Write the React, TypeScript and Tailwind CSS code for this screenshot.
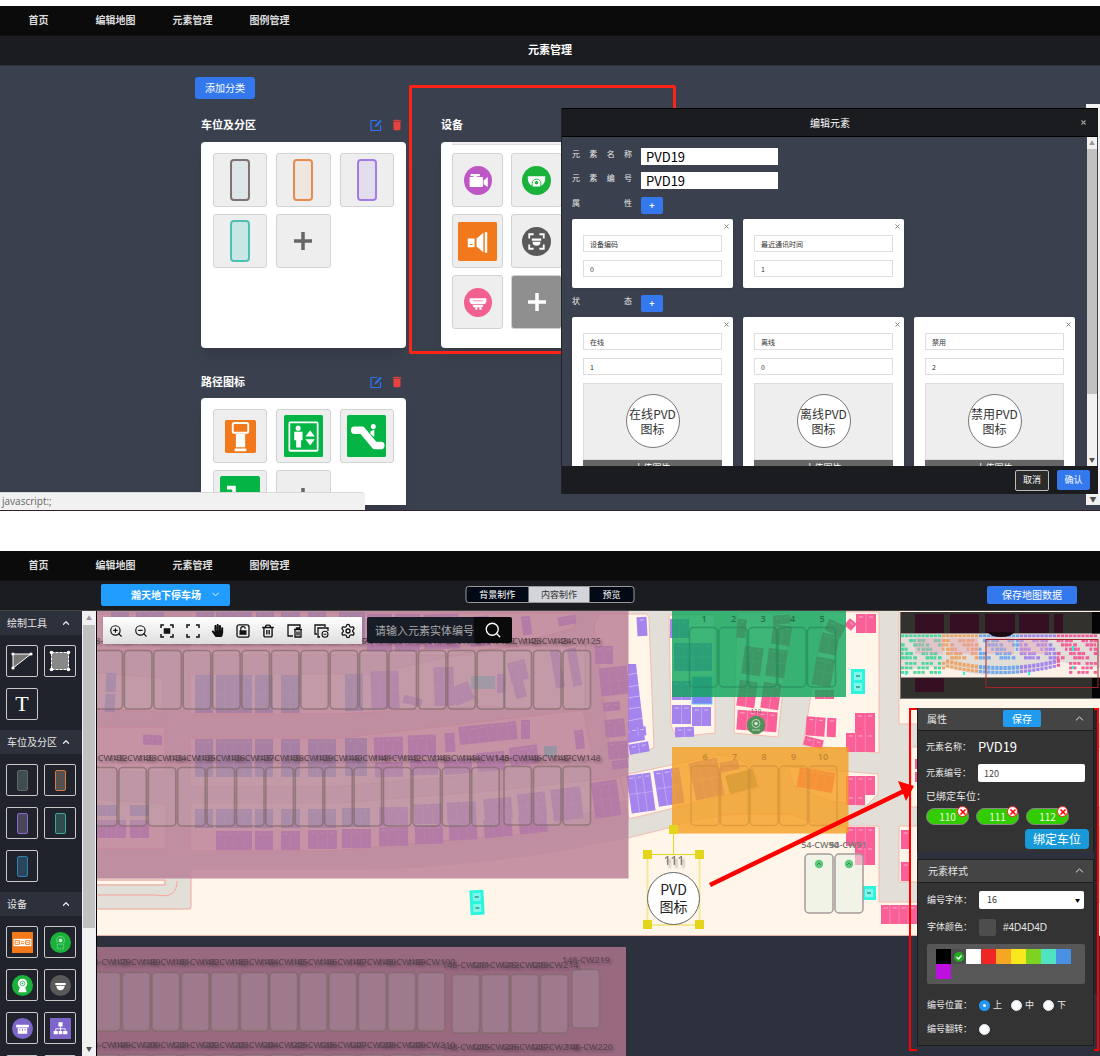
import React from 'react';
import { ChevronDown, ChevronUp, Search, Settings, Trash2, ZoomIn, ZoomOut, X } from 'lucide-react';
import { FaHandPaper } from 'react-icons/fa';
import { MdDelete } from 'react-icons/md';

const navItems = ['首页', '编辑地图', '元素管理', '图例管理'];

function NavBar() {
  return (
    <nav className="flex h-[29px] items-center bg-[#0b0b0b] pb-[2px] text-[10px] font-bold text-[#dcdcdc]">
      {navItems.map((t) => (
        <a key={t} href="#" className="w-[77px] text-center">
          {t}
        </a>
      ))}
    </nav>
  );
}

/* ---------- icons ---------- */

type DeviceKind =
  | 'camera' | 'dome' | 'speaker' | 'scan' | 'detector' | 'kiosk' | 'lift' | 'escalator' | 'stairs'
  | 'display' | 'webcamLine' | 'webcam' | 'halfDome' | 'gate' | 'network';

function DeviceIcon({ kind, className }: { kind: DeviceKind; className: string }) {
  const art: Record<DeviceKind, React.ReactNode> = {
    camera: (
      <>
        <circle cx="20" cy="20" r="20" fill="#bd57c6" />
        <g fill="#fff">
          <rect x="8" y="15" width="19" height="14" rx="1" />
          <rect x="9" y="11" width="14" height="3" rx="1.5" />
          <rect x="14" y="13" width="4" height="3" />
          <path d="M28 20l6-5v14l-6-4z" />
        </g>
      </>
    ),
    dome: (
      <>
        <circle cx="20" cy="20" r="20" fill="#1bb23c" />
        <path d="M8 14h24v4a12 11 0 0 1-24 0z" fill="#fff" />
        <path d="M14 29v-5a6 6 0 0 1 12 0v5z" fill="#fff" stroke="#1bb23c" strokeWidth="1.3" />
        <circle cx="20" cy="23" r="2.4" fill="#1bb23c" />
      </>
    ),
    speaker: (
      <>
        <rect width="40" height="40" rx="1.5" fill="#f1791b" />
        <g fill="#fff">
          <path d="M10 17h7v9h-7zM19 17l7-6v20l-7-6zM27.5 10.5h2.5v21h-2.5z" />
        </g>
        <path d="M12 23h3" stroke="#f1791b" />
      </>
    ),
    scan: (
      <>
        <circle cx="20" cy="20" r="20" fill="#595959" />
        <path d="M10 16v-6h6M24 10h6v6M30 24v6h-6M16 30h-6v-6" fill="none" stroke="#fff" strokeWidth="2.500" />
        <path d="M13.500 16h13v3h-13zM14.500 20.500h11a5.500 5.500 0 0 1-11 0z" fill="#fff" />
      </>
    ),
    detector: (
      <>
        <circle cx="20" cy="20" r="20" fill="#f2608f" />
        <path d="M8 14h24v5l-2 3H10l-2-3z" fill="#fff" />
        <path d="M12 23h16l-2 4H14z" fill="#fff" />
        <path d="M16 27v3h3v-3M22 27v3h3v-3" fill="#fff" />
        <path d="M13 17.500h14" stroke="#f2608f" />
      </>
    ),
    kiosk: (
      <>
        <rect width="40" height="40" rx="2" fill="#f1791b" />
        <rect x="10" y="3.500" width="20" height="12" rx="2" fill="none" stroke="#fff" strokeWidth="2.400" />
        <path d="M14 17h12v16H14zM12.500 34.500h15v3.500h-15z" fill="#fff" />
      </>
    ),
    lift: (
      <>
        <rect width="40" height="40" rx="1.500" fill="#04b545" />
        <rect x="5.500" y="7" width="29" height="27" rx="1" fill="none" stroke="#fff" strokeWidth="1.800" />
        <g fill="#fff">
          <circle cx="14.500" cy="12.500" r="2.500" />
          <path d="M10.500 16h8.500v8h-1.500v7h-5v-7h-2zM22 20.500l4.800-6 4.800 6zM22 23h9.600l-4.800 6z" />
        </g>
      </>
    ),
    escalator: (
      <>
        <rect width="40" height="40" rx="1.500" fill="#04b545" />
        <path d="M7.500 14.500h8l13 14.500h6.500" fill="none" stroke="#fff" strokeWidth="7" strokeLinecap="round" strokeLinejoin="round" />
        <circle cx="27" cy="11" r="2.500" fill="#fff" />
        <path d="M24 15.500l4-1.500v7l-4-3z" fill="#fff" />
      </>
    ),
    stairs: (
      <>
        <rect width="40" height="40" rx="2" fill="#04b545" />
        <path d="M7 11h7v6h7v7h7v7h6" fill="none" stroke="#fff" strokeWidth="3.500" />
      </>
    ),
    display: (
      <>
        <rect width="40" height="40" rx="1" fill="#f1791b" />
        <rect x="3" y="13" width="34" height="14" fill="#fff" />
        <path d="M6 16.500h8v7H6zM26 16.500h8v7h-8z" fill="none" stroke="#f1791b" strokeWidth="1.800" />
        <path d="M9 20h3M17 18.500h6M17 22h6M28 20h4" stroke="#f1791b" strokeWidth="1.500" />
      </>
    ),
    webcamLine: (
      <>
        <circle cx="20" cy="20" r="20" fill="#1bb23c" />
        <circle cx="20" cy="16" r="7.500" fill="none" stroke="#d8f5de" strokeDasharray="3 1" />
        <circle cx="20" cy="16" r="3.500" fill="#bfeec9" />
        <path d="M14 23v9h12v-9" fill="none" stroke="#d8f5de" strokeDasharray="3 1.500" />
      </>
    ),
    webcam: (
      <>
        <circle cx="20" cy="20" r="20" fill="#1bb23c" />
        <circle cx="20" cy="16" r="9" fill="#fff" />
        <path d="M15 23h10l3 10H12z" fill="#fff" />
        <circle cx="20" cy="16" r="4.500" fill="none" stroke="#1bb23c" strokeWidth="1.500" />
        <circle cx="20" cy="16" r="1.500" fill="#1bb23c" />
      </>
    ),
    halfDome: (
      <>
        <circle cx="20" cy="20" r="20" fill="#595959" />
        <path d="M10 15h20v4H10zM12 20.500h16a8 8.500 0 0 1-16 0z" fill="#fff" />
      </>
    ),
    gate: (
      <>
        <circle cx="20" cy="20" r="20" fill="#7d65c9" />
        <path d="M8 13h24v5H8zM11 19h18v11H11z" fill="#fff" />
        <path d="M15 20v4M20 20v5M25 20v4" stroke="#7d65c9" strokeWidth="1.500" />
      </>
    ),
    network: (
      <>
        <rect width="40" height="40" rx="1" fill="#7d65c9" />
        <path d="M16 8h8v8h-8zM7 25h8v6H7zM16.500 25h7v6h-7zM25 25h8v6h-8z" fill="#fff" />
        <path d="M20 16v9M11 25v-4.500h18V25" fill="none" stroke="#fff" strokeWidth="1.600" />
      </>
    ),
  };
  return (
    <svg viewBox="0 0 40 40" preserveAspectRatio="none" className={className} aria-hidden="true">
      {art[kind]}
    </svg>
  );
}

function EditIcon() {
  return (
    <svg viewBox="0 0 12 12" className="size-3" fill="none" stroke="#2f74ea" aria-hidden="true">
      <path d="M7 1.500H1v10h9.500V6" strokeWidth="1.200" />
      <path d="M5 8l.8-2.200L10.300 1l1.200 1.100L7 7z" fill="#2f74ea" strokeWidth=".6" />
    </svg>
  );
}

/* ---------- element management page ---------- */

function PlusIcon({ light }: { light?: boolean }) {
  return (
    <svg viewBox="0 0 18 18" className="size-[18px]" aria-hidden="true">
      <path d="M9 0v18M0 9h18" stroke={light ? '#fff' : '#666'} strokeWidth="3.500" />
    </svg>
  );
}

const tile = 'flex h-[54px] items-center justify-center rounded-[3px] border border-[#d2d2d2] bg-[#eee]';
const slotBase = 'h-[42px] w-5 rounded-[4px] border-2';

function CategoryHeader({ title, tools }: { title: string; tools?: boolean }) {
  return (
    <header className="flex h-[17px] items-center gap-2 pr-[2px]">
      <h2 className="flex-1 text-[11px] leading-[17px] font-bold text-white">{title}</h2>
      {tools && (
        <>
          <button aria-label="编辑"><EditIcon /></button>
          <button aria-label="删除"><MdDelete className="size-[14px] text-[#e8423f]" /></button>
        </>
      )}
    </header>
  );
}

function ElementPage() {
  return (
    <section className="relative overflow-hidden">
      <NavBar />
      <h1 className="h-[31px] border-t border-b border-t-[#111] border-b-[#30343f] bg-[#1b1c1f] text-center text-[11px] leading-[26px] font-bold text-white">
        元素管理
      </h1>
      <div className="relative flex h-[445px] flex-col overflow-hidden border-b border-[#33202c] bg-[#3b404e] pt-[11px] pl-[195px]">
        <button className="h-[22px] w-[60px] rounded-[3px] bg-[#3478ed] pb-[2px] text-[10px] text-white">添加分类</button>
        <div className="mt-[17px] grid grid-cols-[205px_205px] gap-x-[35px] gap-y-[25px] pl-[6px]">
          <article>
            <CategoryHeader title="车位及分区" tools />
            <div className="mt-[9px] grid h-[206px] grid-cols-3 content-start gap-x-[9px] gap-y-[7px] rounded-[4px] bg-white px-[12px] pt-[11px] shadow-lg">
              <button aria-label="灰色车位" className={tile}><span className={slotBase + ' border-[#807272] bg-[#dde7e7]'} /></button>
              <button aria-label="橙色车位" className={tile}><span className={slotBase + ' border-[#e68a4e] bg-[#efe6e0]'} /></button>
              <button aria-label="紫色车位" className={tile}><span className={slotBase + ' border-[#a27ce6] bg-[#e2deeb]'} /></button>
              <button aria-label="青色车位" className={tile}><span className={slotBase + ' border-[#50c0b5] bg-[#c8e6e4]'} /></button>
              <button aria-label="添加车位元素" className={tile}><PlusIcon /></button>
            </div>
          </article>
          <article className="relative">
            <div className="pointer-events-none absolute -top-[31px] -left-[32px] h-[269px] w-[267px] rounded-[2px] border-3 border-[#ff2416]" />
            <CategoryHeader title="设备" />
            <div className="mt-[9px] h-[206px] overflow-hidden rounded-[4px] bg-white px-[11px] shadow-lg">
              <div className="h-[3px] w-[168px] border-b border-[#ddd] bg-[#eee]" />
              <div className="mt-[8px] grid grid-cols-[51px_51px_51px] gap-x-[8px] gap-y-[7px]">
                <button aria-label="摄像机" className={tile}><DeviceIcon kind="camera" className="h-[29px] w-[28px]" /></button>
                <button aria-label="半球摄像机" className={tile}><DeviceIcon kind="dome" className="size-[29px]" /></button>
                <button aria-label="人脸" className={tile} />
                <button aria-label="广播" className={tile}><DeviceIcon kind="speaker" className="size-[39px]" /></button>
                <button aria-label="扫描" className={tile}><DeviceIcon kind="scan" className="size-[29px]" /></button>
                <button aria-label="屏幕" className={tile} />
                <button aria-label="探测器" className={tile}><DeviceIcon kind="detector" className="h-[29px] w-[28px]" /></button>
                <button aria-label="添加设备元素" className="flex h-[54px] items-center justify-center rounded-[3px] border border-[#d2d2d2] bg-[#8f8f8f]"><PlusIcon light /></button>
              </div>
            </div>
          </article>
          <article>
            <CategoryHeader title="路径图标" tools />
            <div className="mt-[8px] grid h-[107px] grid-cols-3 content-start gap-x-[9px] gap-y-[7px] overflow-hidden rounded-t-[4px] bg-white px-[12px] pt-[11px] shadow-lg">
              <button aria-label="缴费机" className={tile}><DeviceIcon kind="kiosk" className="h-[33px] w-[31px]" /></button>
              <button aria-label="电梯" className={tile}><DeviceIcon kind="lift" className="h-[42px] w-[39px]" /></button>
              <button aria-label="扶梯" className={tile}><DeviceIcon kind="escalator" className="h-[42px] w-[39px]" /></button>
              <button aria-label="楼梯" className={tile}><DeviceIcon kind="stairs" className="h-[42px] w-[40px]" /></button>
              <button aria-label="添加路径元素" className={tile}><PlusIcon /></button>
            </div>
          </article>
        </div>
        <div className="absolute top-[38px] right-0 flex h-[401px] w-[14px] flex-col justify-end bg-[#f1f1f1]">
          <span className="h-[11px] text-center text-[7px] leading-[10px] text-[#505050]">▼</span>
        </div>
        <div className="absolute bottom-0 left-0 h-[18px] w-[365px] rounded-tr-[4px] border-t border-[#d8d8d8] bg-[#f1f1f1] pl-[2px] font-['Open_Sans',sans-serif] text-[10px] leading-[17px] text-[#666]">
          javascript:;
        </div>
      </div>
      <EditDialog />
    </section>
  );
}

function CardShell({ children }: { children: React.ReactNode }) {
  return (
    <div className="relative w-[161px] rounded-[2px] bg-white px-[11px] pt-4 pb-[11px] shadow">
      <button aria-label="移除" className="absolute top-[4px] right-[3px]">
        <X className="size-[7px] text-[#777]" strokeWidth={3} />
      </button>
      {children}
    </div>
  );
}

const field = 'block h-[17px] w-full border border-[#dedede] bg-white px-[6px] text-[7px] text-[#333] outline-none';

function FormLabel({ htmlFor, children }: { htmlFor?: string; children: React.ReactNode }) {
  return (
    <label htmlFor={htmlFor} className="w-[60px] text-[8px] leading-[12px] [text-align-last:justify] text-[#e8e8e8]">
      {children}
    </label>
  );
}

function EditDialog() {
  const states = [
    ['在线', '1'],
    ['离线', '0'],
    ['禁用', '2'],
  ];
  const attrs = [
    ['设备编码', '0'],
    ['最近通讯时间', '1'],
  ];
  return (
    <div role="dialog" aria-label="编辑元素" className="absolute top-[102px] right-[2px] flex h-[386px] w-[537px] flex-col border-l border-[#20232a] bg-[#3b404e]">
      <header className="relative flex h-[29px] items-center justify-center border-y border-black bg-[#1b1c1f] text-[10px] text-white">
        编辑元素
        <button aria-label="关闭" className="absolute right-[11px]"><X className="size-[7px] text-[#999]" strokeWidth={4} /></button>
      </header>
      <div className="flex min-h-0 flex-1">
        <form className="min-w-0 flex-1 overflow-hidden pt-[11px] pl-[10px]">
          <div className="flex gap-[9px]">
            <FormLabel htmlFor="el-name">元素名称</FormLabel>
            <input id="el-name" defaultValue="PVD19" className="h-[17px] w-[137px] bg-white px-[5px] text-[13px] leading-[17px] text-black" />
          </div>
          <div className="mt-[7px] flex gap-[9px]">
            <FormLabel htmlFor="el-code">元素编号</FormLabel>
            <input id="el-code" defaultValue="PVD19" className="h-[17px] w-[137px] bg-white px-[5px] text-[13px] leading-[17px] text-black" />
          </div>
          <div className="mt-[8px] flex gap-[9px]">
            <FormLabel>属性</FormLabel>
            <button type="button" aria-label="添加属性" className="h-[17px] w-[22px] rounded-[2px] bg-[#3478ed] text-[9px] font-bold text-white">+</button>
          </div>
          <div className="mt-[5px] flex gap-[10px]">
            {attrs.map(([n, v]) => (
              <CardShell key={n}>
                <input aria-label="属性名" defaultValue={n} className={field} />
                <input aria-label="属性值" defaultValue={v} className={'mt-[8px] ' + field} />
              </CardShell>
            ))}
          </div>
          <div className="mt-[7px] flex gap-[9px]">
            <FormLabel>状态</FormLabel>
            <button type="button" aria-label="添加状态" className="h-[17px] w-[22px] rounded-[2px] bg-[#3478ed] text-[9px] font-bold text-white">+</button>
          </div>
          <div className="mt-[5px] flex gap-[10px]">
            {states.map(([n, v]) => (
              <CardShell key={n}>
                <input aria-label="状态名" defaultValue={n} className={field} />
                <input aria-label="状态值" defaultValue={v} className={'mt-[8px] ' + field} />
                <div className="mt-[8px] flex h-[77px] items-center justify-center border border-[#ddd] bg-[#eee] pb-[2px]">
                  <div className="flex size-[54px] flex-col items-center justify-center rounded-full border border-[#777] bg-white text-[12px] leading-[15px] whitespace-nowrap text-[#333]">
                    <span>{n}PVD</span>
                    <span>图标</span>
                  </div>
                </div>
                <button type="button" className="block h-[18px] w-full bg-[#666] pb-[3px] text-[9px] leading-[15px] text-white">上传图片</button>
              </CardShell>
            ))}
          </div>
        </form>
        <div className="mr-px flex w-[10px] flex-col items-center bg-[#f1f1f1]">
          <span className="h-[12px] text-[6px] leading-[12px] text-[#999]">▲</span>
          <div className="h-[245px] w-full bg-[#c1c1c1]" />
          <span className="mt-auto h-[12px] text-[6px] leading-[12px] text-[#505050]">▼</span>
        </div>
      </div>
      <footer className="flex h-[28px] items-center justify-end gap-[8px] bg-[#1b1c1f] pr-[8px]">
        <button className="h-[21px] w-[34px] rounded-[2px] border border-[#bbb] bg-[#2b2b2b] text-[9px] text-white">取消</button>
        <button className="h-[20px] w-[33px] rounded-[2px] bg-[#3478ed] text-[9px] text-white">确认</button>
      </footer>
    </div>
  );
}

/* ---------- parking map ---------- */

type Block = [number, number, number, number, number?];

const blueBlocks: Block[] = [
  [106, 673, 10, 19, 3], [105, 694, 10, 18, 3],
  [195, 675, 18, 38], [216, 675, 36, 38], [255, 675, 18, 38], [281, 675, 19, 38], [345, 674, 18, 37],
  [195, 739, 18, 38], [216, 739, 36, 38], [255, 739, 18, 38], [281, 739, 19, 38], [308, 739, 28, 38], [345, 738, 22, 38],
  [97, 805, 20, 11], [130, 805, 19, 11], [195, 809, 18, 19], [216, 809, 36, 19], [255, 809, 18, 19], [281, 809, 19, 19],
  [308, 809, 28, 19], [342, 808, 28, 19],
  [111, 612, 18, 10], [136, 612, 28, 10], [196, 612, 18, 28], [216, 612, 36, 28], [256, 612, 18, 28], [281, 612, 19, 28], [308, 612, 18, 28], [339, 612, 26, 28],
];
const purpleBlocks: Block[] = [
  [97, 820, 29, 18], [130, 820, 19, 18],
  [143, 735, 19, 10, 3], [371, 671, 28, 38, -2], [403, 697, 19, 8, 15], [434, 667, 20, 39, -2], [452, 684, 20, 19, -22],
  [497, 674, 9, 19], [509, 661, 18, 20, -14], [514, 680, 11, 18, -14], [553, 650, 9, 38, -10], [570, 648, 9, 38, -10],
  [367, 614, 25, 38], [395, 614, 25, 38], [424, 614, 35, 35, -2], [470, 616, 20, 30, -5], [522, 616, 9, 19, -8], [558, 616, 18, 9, -10],
  [595, 646, 18, 18],
  [374, 737, 29, 22, -2], [408, 735, 28, 22, -2], [445, 733, 10, 19, -4], [459, 724, 58, 18, -6], [521, 720, 9, 19], [575, 730, 9, 19, -6],
  [375, 762, 28, 15, -2], [410, 760, 28, 15, -2], [444, 759, 28, 15, -4], [477, 752, 28, 19, -5], [510, 746, 28, 19, -8],
  [379, 807, 29, 19, -1], [414, 804, 28, 20, -2], [447, 802, 29, 20, -3], [484, 798, 28, 21, -5], [518, 793, 28, 25, -6], [552, 788, 30, 32, -7], [593, 781, 26, 36, -8],
  [379, 827, 29, 19, -1], [415, 825, 28, 19, -2], [449, 822, 28, 18, -3], [484, 819, 28, 18, -5], [519, 815, 28, 18, -6],
  [216, 831, 36, 19], [255, 831, 18, 19], [281, 831, 19, 19], [308, 830, 29, 19], [342, 829, 29, 19],
  [600, 667, 28, 28, -6], [603, 702, 17, 9, -6], [605, 719, 20, 18, -5], [608, 741, 20, 18, -5], [612, 760, 16, 9, -8],
  [637, 617, 10, 19, -3], [630, 727, 16, 9, -6], [629, 743, 20, 10, -10],
  [670, 619, 19, 19], [674, 643, 38, 28], [672, 681, 19, 19], [672, 705, 19, 19], [692, 707, 19, 19], [675, 727, 19, 10, -2],
  [629, 774, 24, 38, -8], [656, 769, 26, 36, -9], [692, 760, 29, 38, -12], [720, 761, 19, 10, -12],
];
const pinkBlocks: Block[] = [
  [737, 711, 40, 20, 4], [738, 681, 18, 26, 8], [762, 683, 18, 26, 8], [743, 647, 19, 28, 8], [767, 649, 19, 28, 8], [737, 619, 9, 19, 5],
  [772, 625, 19, 20, 8], [773, 615, 17, 9, -4], [826, 622, 18, 12, 25], [820, 634, 18, 20, 12], [814, 658, 19, 28, 10], [815, 690, 19, 9],
  [806, 717, 19, 19, 4], [827, 718, 9, 19, 2], [804, 738, 19, 9, 14], [855, 713, 20, 20], [846, 733, 29, 19], [856, 614, 20, 19], [846, 620, 9, 9, 40],
  [846, 776, 29, 19], [846, 795, 19, 10], [846, 827, 29, 19], [855, 846, 20, 19], [901, 830, 9, 19], [901, 862, 9, 19], [881, 905, 36, 19],
  [798, 770, 36, 20, 10], [915, 759, 8, 10], [915, 772, 8, 10],
];

function blockRect([x, y, w, h, r = 0]: Block, fill: string, i: number) {
  const n = Math.max(1, Math.round(w / 9.5));
  return (
    <g key={i} transform={`rotate(${r} ${x + w / 2} ${y + h / 2})`}>
      <rect x={x} y={y} width={w} height={h} fill={fill} />
      {Array.from({ length: n - 1 }, (_, k) => (
        <path key={k} d={`M${x + ((k + 1) * w) / n} ${y}v${h}`} stroke="#fff" strokeOpacity=".35" strokeWidth=".7" />
      ))}
      {h > 24 && <path d={`M${x} ${y + h / 2}h${w}`} stroke="#fff" strokeOpacity=".35" strokeWidth=".7" />}
      {Array.from({ length: n }, (_, k) => (
        <path key={'t' + k} d={`M${x + ((k + 0.3) * w) / n} ${y + 3}h4`} stroke="#fff" strokeOpacity=".5" />
      ))}
    </g>
  );
}

type Stall = { x: number; y: number; label: string; ly: number };
const series = (count: number, x0: number, pitch: number, y: number, ly: number, first: number): Stall[] =>
  Array.from({ length: count }, (_, i) => ({ x: x0 + i * pitch, y, ly, label: `148-CW${first + i}` }));

const stalls: Stall[] = [
  ...series(14, 95, 29.4, 650.5, 644, 109),
  ...series(3, 504, 29.5, 650.5, 644, 123),
  ...series(14, 89.500, 29.4, 767.5, 761, 132),
  ...series(3, 504, 29.5, 766.5, 761, 146),
  ...series(12, 93, 29.5, 972.5, 965, 179),
  ...series(4, 452, 29.5, 974.5, 968, 211),
  ...series(1, 572, 29.5, 969.5, 963, 219),
  ...series(12, 93, 29.5, 1054.5, 1048, 199),
  ...series(4, 452, 29.5, 1056.5, 1050, 215),
  ...series(1, 575, 29.5, 1060, 1050, 220),
];

function Cyan({ x, y, h = 25 }: { x: number; y: number; h?: number }) {
  return (
    <g>
      <rect x={x} y={y} width="14" height={h} fill="#2cf5dd" />
      <rect x={x + 3} y={y + 3} width="8" height="8" fill="#7ff7ea" />
      <path d={`M${x + 5} ${y + 7}h4`} stroke="#28786f" strokeWidth="2" strokeOpacity=".6" />
      {h > 20 && (
        <>
          <rect x={x + 3} y={y + 14} width="8" height="8" fill="#7ff7ea" />
          <path d={`M${x + 5} ${y + 18}h4`} stroke="#28786f" strokeWidth="2" strokeOpacity=".6" />
        </>
      )}
    </g>
  );
}

function ParkingMap() {
  return (
    <svg className="absolute inset-0 h-full w-full" aria-label="停车场地图" fontFamily="'Open Sans',sans-serif">
      <g transform="translate(-97 -611)">
        <rect x="97" y="611" width="2000" height="325" fill="#fff5e8" />
        <path d="M97 611H1100V902H879V826H828L790 815L740 814Q700 816 672 827L628 838L560 852Q420 872 330 870H191V909H97z" fill="#e2dfd8" />
        <path d="M97 880h68v5H97M97 909h92q2 0 2-2v-30M97 895h60q20 4 20-14" fill="none" stroke="#f6a39b" />
        <path d="M97 881h67v3H97z" fill="#fff5e8" />
        <g fill="#fff5e8" stroke="#f3b6ab" strokeWidth=".9">
          <path d="M60 614H163V650H60zM60 670L163 678V712L60 708zM60 727H165V772L60 770zM60 797l106 7v45H60z" />
          <path d="M190 613H575V628L470 655H190zM190 674H370L480 650L585 640V710L480 706L340 714H190zM190 738H340L583 710L592 755L470 775L330 787H190zM190 803H340L500 790L628 776V800L520 834L330 851H190z" />
          <path d="M600 614h47l2 4 5 130-43 12-17-136zM669 615h46v118l-39 4-5-12zM737 613h54l-13 124-44-4zM824 612h55v141l-76-8z" />
          <path d="M620 776l98-21 17 2 20 12 4 18-130 32zM788 767l90 7v20l-12 12-36-5-36-15z" />
          <path d="M899 600h220v124H899zM911 747h200v60H911zM899 826h200v56H899z" />
          <path d="M628 838l44-11q30-11 68-13h50l38 12h51v76h240" fill="none" />
        </g>
        <path d="M628 664l8 0 9 76-17 3z" fill="#a584ee" />
        <path d="M628 675l9-2M628 687l11-2M628 698l12-2M628 709l13-2M628 721l15-3M628 732l15-2" stroke="#fff" strokeOpacity=".4" />
        {blueBlocks.map((b, i) => blockRect(b, '#6d9be8', i))}
        {purpleBlocks.map((b, i) => blockRect(b, '#a584ee', i))}
        {pinkBlocks.map((b, i) => blockRect(b, '#fa5f98', i))}
        <rect x="692" y="677" width="20" height="27" fill="#7f83ef" stroke="#6bc7f5" />
        <rect x="727" y="772" width="29" height="19" fill="#7fa29a" transform="rotate(-15 741 781)" />
        <rect x="471" y="676" width="24" height="13" fill="#2cf5dd" />
        <rect x="544" y="746" width="13" height="11" fill="#2cf5dd" />
        <Cyan x={851} y={669} />
        <Cyan x={862} y={886} h={14} />
        <g transform="rotate(-3 477 902)"><Cyan x={470} y={890} /></g>

        <path d="M97 935.500H2100" stroke="#e7b4ac" />
        <rect x="97" y="936" width="2000" height="900" fill="#2c313d" />

        <rect x="90" y="611" width="538.500" height="267.500" fill="#b77892" fillOpacity=".79" />
        <rect x="90" y="947" width="536" height="120" fill="#b77892" fillOpacity=".79" />
        <rect x="672" y="611" width="174" height="86" fill="#0ea65a" fillOpacity=".8" />
        <rect x="672" y="747" width="176.500" height="86.500" fill="#f59f20" fillOpacity=".8" />

        <g fill="#b4b4b4" fillOpacity=".22" stroke="#7d6a66" strokeOpacity=".65" strokeWidth="1.600">
          {stalls.map((s, i) => (
            <rect key={i} x={s.x} y={s.y} width="27.500" height="58.500" rx="4" />
          ))}
        </g>
        <g fill="none" strokeWidth="1.500" strokeOpacity=".6">
          {[0, 1, 2, 3, 4].map((i) => (
            <g key={i}>
              <rect x={689.500 + i * 29.500} y="627.500" width="28" height="59.500" rx="4" stroke="#23855a" />
              <rect x={691 + i * 29.500} y="766" width="28" height="59.500" rx="4" stroke="#cf8f3a" />
            </g>
          ))}
        </g>
        <g fontSize="9" fontWeight="600" textAnchor="middle">
          <g fill="#55424a" fillOpacity=".8" style={{ filter: 'drop-shadow(2px 2px 1px rgba(58,38,48,.45))' }}>
            {stalls.map((s, i) => (
              <text key={i} x={s.x + 14} y={s.ly}>{s.label}</text>
            ))}
          </g>
          {[0, 1, 2, 3, 4].map((i) => (
            <g key={i}>
              <text x={704 + i * 29.500} y="622" fill="#22704a">{i + 1}</text>
              <text x={705 + i * 29.500} y="760" fill="#c08434">{i + 6}</text>
            </g>
          ))}
        </g>

        <g fill="#e8f0e6" fillOpacity=".55" stroke="#a69b98" strokeWidth="1.500">
          <rect x="805" y="854" width="28" height="59" rx="4" />
          <rect x="835" y="854" width="28" height="59" rx="4" />
        </g>
        {[819, 849].map((x) => (
          <g key={x}>
            <circle cx={x} cy="864" r="4.200" fill="#5fc97b" />
            <path d={`M${x - 2} 865l2-2 2 2`} fill="none" stroke="#2e8a4a" />
          </g>
        ))}
        <g fontSize="9" fontWeight="600" fill="#777" textAnchor="middle">
          <text x="820" y="848">54-CW90</text>
          <text x="848" y="848">54-CW91</text>
        </g>

        <circle cx="756" cy="725" r="9.200" fill="#4f9158" />
        <circle cx="756" cy="723.500" r="4" fill="none" stroke="#cfe8cf" strokeWidth=".8" />
        <circle cx="756" cy="723.500" r="1.800" fill="#cfe8cf" />
        <path d="M752 730h8" stroke="#cfe8cf" strokeWidth=".8" />
        <text x="756" y="713" fontSize="6" textAnchor="middle" fill="#555">110</text>

        <g stroke="#e3d41c" fill="none">
          <path d="M673.500 829v26M647 854.500h53" />
          <path d="M647.500 855v70h52v-70" strokeWidth="1.800" strokeOpacity=".4" />
        </g>
        <g fill="#e3d41c">
          <rect x="669" y="825" width="9" height="9" />
          <rect x="643" y="850" width="9" height="9" />
          <rect x="695" y="850" width="9" height="9" />
          <rect x="643" y="920" width="9" height="9" />
          <rect x="695" y="920" width="9" height="9" />
        </g>
        <circle cx="673.500" cy="898.500" r="26" fill="#fff" stroke="#666" />
        <g textAnchor="middle">
          <text x="674" y="865" fontSize="12" fontWeight="600" fill="#858078" style={{ filter: 'drop-shadow(2px 3px 1px rgba(100,95,85,.5))' }}>111</text>
          <g fontSize="14" fill="#222" fontFamily="'Noto Sans CJK SC',sans-serif">
            <text x="673.500" y="895">PVD</text>
            <text x="673.500" y="912">图标</text>
          </g>
        </g>
        <path d="M710 885L905 790.500" stroke="#f00" strokeWidth="4.500" />
        <path d="M898 781l16 5-8 15z" fill="#f00" />
      </g>
    </svg>
  );
}

function MiniMap() {
  const colors = ['#4fd6a0', '#eda566', '#6faaf0', '#a584ee', '#f1609a'];
  const zone = (x: number) => colors[x < 38 ? 0 : x < 76 ? 1 : x < 116 ? 2 : x < 156 ? 3 : 4];
  const cells: React.ReactNode[] = [];
  const put = (key: string, x: number, y: number, w: number, h: number) =>
    cells.push(<rect key={key} x={x} y={y} width={w} height={h} fill={zone(x)} />);
  for (let c = 0; c < 48; c++) {
    const x = 1 + c * 4.1;
    put('t' + c, x, 22.500, 3.300, 2.600);
    for (let r = 0; r < 5; r++) {
      if ((c * 7 + r * 5) % 6 < 2) continue;
      put(`m${r}-${c}`, x, 27 + r * 4.300, (c + r) % 3 ? 3.700 : 2.500, 3.200);
    }
    if (x > 42 && x < 160) {
      const bend = 8 * (1 - ((x - 100) / 60) ** 2);
      put('c' + c, x, 46 + bend, 3.200, 4);
      put('d' + c, x, 51 + bend, 3.200, 3);
    } else {
      for (let r = 0; r < 3; r++) {
        if ((c + r) % 4 === 0 || (x > 160 && x < 168)) continue;
        put(`e${r}-${c}`, x, 50 + r * 4.500, 3.200, 2.800);
      }
    }
  }
  return (
    <svg className="absolute top-[1px] right-0 h-[87px] w-[200px]" viewBox="0 0 200 87" aria-label="缩略图">
      <rect width="200" height="87" fill="#32312e" />
      <rect y="21.500" width="200" height="44" fill="#fbf0e6" />
      <path d="M0 22h200v34l-40-6q-60 24-118 4l-42 4z" fill="#e2ddd8" />
      {cells}
      <g fill="#e8a0b8" fillOpacity=".4">
        <path d="M15 26h28v16H15zM50 26h28v16H50zM86 26h28v16H86zM119 26h29v16h-29z" />
      </g>
      <g fill="#2cf5dd"><path d="M5 60h2v3h-2zM39 59h2v3h-2zM63 60h2v3h-2zM128 60h2v3h-2zM172 34h2v5h-2zM172 54h2v3h-2z" /></g>
      <g fill="#350f22">
        <path d="M15 2h29v19H15zM50 2h29v19H50zM85 2h30v19H85zM119 2h30v19h-30zM154 2h9v19h-9zM15 66h29v14H15z" />
      </g>
      <path d="M88 20q2 5 13 5t13-5z" fill="#1c0a12" />
      <path d="M192 0h8v21.500h-8zM192 66h8v21h-8z" fill="#050505" />
      <rect x="86" y="27.500" width="112" height="48" fill="none" stroke="#a3232a" />
      <path d="M.5 0v86.500H200" fill="none" stroke="#777" />
    </svg>
  );
}

/* ---------- map editor ---------- */

const ink = { fill: 'none', stroke: '#111', strokeWidth: 1.5 } as const;
const toolIcons: [string, React.ReactNode][] = [
  ['放大', <ZoomIn className="size-[14px]" />],
  ['缩小', <ZoomOut className="size-[14px]" />],
  ['居中', <svg viewBox="0 0 14 14" className="size-[14px]" {...ink}><path d="M1 4V1h3M10 1h3v3M13 10v3h-3M4 13H1v-3" /><path d="M4.500 5h5v4h-5z" fill="#111" /></svg>],
  ['全屏', <svg viewBox="0 0 14 14" className="size-[14px]" {...ink}><path d="M1 4V1h3M10 1h3v3M13 10v3h-3M4 13H1v-3" /></svg>],
  ['拖动', <FaHandPaper className="size-[13px]" />],
  ['锁定', <svg viewBox="0 0 14 14" className="size-[14px]" {...ink}><rect x="1" y=".8" width="12" height="12.400" rx="2" strokeWidth="1.300" /><path d="M4.800 7V5a2.200 2.200 0 0 1 4.400-.3" strokeWidth="1.200" /><rect x="3.500" y="6.300" width="7" height="4.500" fill="#111" stroke="none" /></svg>],
  ['删除', <Trash2 className="size-[14px]" strokeWidth={2.4} />],
  ['删除图层', <svg viewBox="0 0 15 14" className="h-[14px] w-[15px]" {...ink}><path d="M13 4V1H1v11h5" strokeWidth="1.300" /><path d="M7 5.500h8M9.500 5V4h3v1M8 6v7h6V6M10 7.500v4M12 7.500v4" strokeWidth="1.300" /></svg>],
  ['移出图层', <svg viewBox="0 0 15 14" className="h-[14px] w-[15px]" {...ink}><path d="M3 10H1V1h10v2M6 13H4V4h10v3" strokeWidth="1.300" /><circle cx="11" cy="10.300" r="3" strokeWidth="1.100" /><path d="M9.500 10.300h3" strokeWidth="1" /></svg>],
  ['设置', <Settings className="size-[16px]" />],
];

const sideTile = 'flex size-8 items-center justify-center rounded-[2px] border border-[#c9c9c9] bg-[#20232b]';
const sideSlot = 'h-[21px] w-[11px] rounded-[2px] border';

function SideGroup({ title, children }: { title: string; children: React.ReactNode }) {
  return (
    <section>
      <h3 className="flex h-6 items-center justify-between bg-[#2d313c] pr-[11px] pb-px pl-[7px] text-[10px] text-[#e6e6e6]">
        {title}
        <ChevronUp className="size-[10px]" strokeWidth={3} />
      </h3>
      <div className="grid grid-cols-[32px_32px] gap-x-[6px] gap-y-[11px] px-[6px] py-[10px]">{children}</div>
    </section>
  );
}

function Sidebar() {
  return (
    <aside className="flex w-[97px] shrink-0 border-r border-black bg-[#20232b]">
      <div className="w-[82px]">
        <SideGroup title="绘制工具">
          <button aria-label="多边形" className={sideTile}>
            <svg viewBox="0 0 22 20" className="h-5 w-[22px]"><path d="M2 3h18L2 17z" fill="#777" stroke="#fff" /><g fill="#fff"><circle cx="2" cy="3" r="1.600" /><circle cx="20" cy="3" r="1.600" /><circle cx="2" cy="17" r="1.600" /></g></svg>
          </button>
          <button aria-label="矩形" className={sideTile}>
            <svg viewBox="0 0 22 22" className="size-[22px]"><rect x="2.500" y="2.500" width="17" height="17" fill="#888" stroke="#fff" strokeDasharray="3 1" /><g fill="#fff"><circle cx="2.500" cy="2.500" r="1.800" /><circle cx="19.500" cy="2.500" r="1.800" /><circle cx="2.500" cy="19.500" r="1.800" /><circle cx="19.500" cy="19.500" r="1.800" /></g></svg>
          </button>
          <button aria-label="文字" className={sideTile + ' font-["Liberation_Serif",serif] text-[22px] leading-none text-white'}>T</button>
        </SideGroup>
        <SideGroup title="车位及分区">
          <button aria-label="灰色车位" className={sideTile}><span className={sideSlot + ' border-[#666] bg-[#3e4e50]'} /></button>
          <button aria-label="橙色车位" className={sideTile}><span className={sideSlot + ' border-[#d87a42] bg-[#54504e]'} /></button>
          <button aria-label="紫色车位" className={sideTile}><span className={sideSlot + ' border-[#8a66d0] bg-[#4a4858]'} /></button>
          <button aria-label="青色车位" className={sideTile}><span className={sideSlot + ' border-[#3ca79c] bg-[#2f4c4e]'} /></button>
          <button aria-label="蓝色车位" className={sideTile}><span className={sideSlot + ' border-[#2f7fb0] bg-[#2b465a]'} /></button>
        </SideGroup>
        <div className="h-[164px] overflow-hidden">
          <SideGroup title="设备">
            <button aria-label="显示屏" className={sideTile}><DeviceIcon kind="display" className="size-[21px]" /></button>
            <button aria-label="车位相机" className={sideTile}><DeviceIcon kind="webcamLine" className="size-[21px]" /></button>
            <button aria-label="相机" className={sideTile}><DeviceIcon kind="webcam" className="size-[21px]" /></button>
            <button aria-label="半球" className={sideTile}><DeviceIcon kind="halfDome" className="size-[21px]" /></button>
            <button aria-label="闸机" className={sideTile}><DeviceIcon kind="gate" className="size-[21px]" /></button>
            <button aria-label="网络" className={sideTile}><DeviceIcon kind="network" className="size-[21px]" /></button>
            <button aria-label="设备七" className={sideTile} />
            <button aria-label="设备八" className={sideTile} />
          </SideGroup>
        </div>
      </div>
      <div className="flex w-[14px] flex-col items-center bg-[#f1f1f1]">
        <span className="h-[14px] text-[6px] leading-[14px] text-[#999]">▲</span>
        <div className="h-[303px] w-3 bg-[#c1c1c1]" />
        <span className="mt-auto h-[14px] text-[6px] leading-[14px] text-[#505050]">▼</span>
      </div>
    </aside>
  );
}

const swatches = [
  'bg-black', 'bg-[#4d4d4d]', 'bg-white', 'bg-[#ee2626]', 'bg-[#f5a623]', 'bg-[#f8e71c]',
  'bg-[#7ed321]', 'bg-[#50e3c2]', 'bg-[#4a90e2]', 'bg-[#bd10e0]',
];

const radioClass =
  'size-[11px] appearance-none rounded-full border border-[#dfe9f3] bg-white checked:border-4 checked:border-[#2196f3]';

function PropertyPanel() {
  return (
    <div className="absolute top-[97px] right-[1px] border-2 border-[#f00] pr-[3px] pl-[6px]">
      <div className="absolute top-0 right-0 h-[284px] w-[3px] bg-[#25272c]" />
      <div className="relative -mt-[2px] w-[177px] bg-[#2c313d] pb-[3px] text-[9px] text-[#e8e8e8]">
        <div className="absolute inset-x-0 -bottom-[2px] h-[2px] bg-[#2c313d]" />
        <section className="border-x border-[#1c1c1c] bg-[#333]">
          <header className="relative flex h-[23px] items-center border-b border-[#1e1e1e] bg-[#444] pb-[2px] pl-[9px] text-[10px]">
            属性
            <button className="absolute left-[85px] h-[17px] w-[38px] rounded-[2px] bg-[#209bf0] text-[10px] text-white">保存</button>
            <ChevronUp className="absolute right-[7px] size-[13px]" strokeWidth={1.8} />
          </header>
          <div className="px-[8px] pt-[6px] pb-[3px]">
            <div className="flex h-[19px] items-center">
              <span className="w-[52px]">元素名称：</span>
              <span className="text-[13px] text-white">PVD19</span>
            </div>
            <div className="mt-[8px] flex h-[18px] items-center">
              <label htmlFor="prop-code" className="w-[52px]">元素编号：</label>
              <input id="prop-code" defaultValue="120" className="h-[18px] w-[107px] rounded-[2px] bg-white px-[6px] text-[9px] text-[#444]" />
            </div>
            <p className="mt-[7px] text-[10px] leading-[14px]">已绑定车位：</p>
            <div className="mt-[5px] flex gap-[7px]">
              {['110', '111', '112'].map((n) => (
                <span key={n} className="relative h-[17px] w-[43px] rounded-full border border-[#888] bg-[#33cc00] text-center text-[10px] leading-[15px] text-[#e8ffe0]">
                  {n}
                  <button aria-label={'解绑' + n} className="absolute -top-[3px] right-0 flex size-[11px] items-center justify-center rounded-full border border-[#f22] bg-white">
                    <X className="size-[8px] text-[#f00]" strokeWidth={5} />
                  </button>
                </span>
              ))}
            </div>
            <button className="mt-[4px] -mr-[4px] ml-auto block h-[20px] w-[64px] rounded-[4px] bg-[#199ad8] text-[12px] leading-[20px] text-white">绑定车位</button>
          </div>
        </section>
        <section className="mt-[7px] border border-[#1c1c1c] bg-[#333]">
          <header className="flex h-[23px] items-center justify-between border-b border-[#1e1e1e] bg-[#444] pr-[7px] pb-[2px] pl-[10px] text-[10px]">
            元素样式
            <ChevronUp className="size-[13px]" strokeWidth={1.8} />
          </header>
          <div className="px-[9px] pt-[8px] pb-[9px]">
            <div className="flex h-[18px] items-center">
              <label htmlFor="font-size" className="w-[52px]">编号字体：</label>
              <div className="relative">
                <select id="font-size" defaultValue="16" className="h-[18px] w-[105px] appearance-none rounded-[2px] bg-white px-[8px] text-[9px] text-[#333]">
                  <option>16</option>
                </select>
                <span className="pointer-events-none absolute top-[3px] right-[4px] text-[5px] leading-[12px] text-black">▼</span>
              </div>
            </div>
            <div className="mt-[9px] flex h-[18px] items-center">
              <span className="w-[52px]">字体颜色：</span>
              <span className="size-[17px] rounded-[2px] bg-[#4d4d4d]" />
              <span className="ml-[7px] font-['Liberation_Sans',sans-serif] text-[10px]">#4D4D4D</span>
            </div>
            <div className="mt-[8px] -mr-[1px] flex h-[40px] flex-wrap content-start rounded-[2px] bg-[#575757] pt-[5px] pr-[12px] pl-[9px]">
              {swatches.map((c, i) => (
                <button key={c} aria-label={'颜色' + (i + 1)} className={'flex size-[15px] items-center justify-center ' + c}>
                  {i === 1 && (
                    <svg viewBox="0 0 10 10" className="size-[10px]"><circle cx="5" cy="5" r="5" fill="#1fae1f" /><path d="M2.500 5l2 2 3-3.500" fill="none" stroke="#fff" strokeWidth="1.400" /></svg>
                  )}
                </button>
              ))}
            </div>
            <div className="mt-[14px] flex h-[14px] items-center">
              <span className="w-[52px]">编号位置：</span>
              {['上', '中', '下'].map((t, i) => (
                <label key={t} className="flex w-8 items-center gap-[3px] text-[9px]">
                  <input type="radio" name="pos" defaultChecked={i === 0} className={radioClass} />
                  {t}
                </label>
              ))}
            </div>
            <div className="mt-[10px] flex h-[14px] items-center">
              <label htmlFor="flip" className="w-[52px]">编号翻转：</label>
              <input id="flip" type="radio" name="flip" className={radioClass} />
            </div>
          </div>
        </section>
      </div>
    </div>
  );
}

function EditorPage() {
  return (
    <section>
      <NavBar />
      <div className="relative flex h-[31px] items-center justify-between border-t border-b border-t-[#111] border-b-[#444] bg-[#1b1c1f] pr-[23px] pb-[2px] pl-[101px]">
        <button className="flex h-[22px] w-[129px] items-center justify-end gap-[9px] rounded-[2px] bg-[#209dff] pr-[9px] text-[10px] font-bold text-white">
          瀚天地下停车场
          <ChevronDown className="size-[11px]" />
        </button>
        <div className="absolute left-1/2 flex h-[17px] w-[169px] -translate-x-1/2 overflow-hidden rounded-[3px] border border-[#9a9a9a] bg-[#030a16] text-[9px] leading-[15px] text-white">
          <button className="flex-[62] leading-[15px]">背景制作</button>
          <button className="flex-[62] bg-[#d3d5da] leading-[15px] text-[#333]">内容制作</button>
          <button className="flex-[44] leading-[15px]">预览</button>
        </div>
        <button className="h-[18px] w-[90px] rounded-[2px] bg-[#3478ed] text-[10px] leading-[17px] text-white">保存地图数据</button>
      </div>
      <div className="flex">
        <Sidebar />
        <main className="relative min-w-0 flex-1 overflow-hidden bg-[#2c313d]">
          <ParkingMap />
          <MiniMap />
          <div className="relative flex gap-[5px] pt-[6px] pl-[6px]">
            <div role="toolbar" aria-label="地图工具" className="flex h-[27px] w-[259px] items-center justify-around bg-linear-to-b from-white to-[#dedede] text-[#111] shadow">
              {toolIcons.map(([name, icon]) => (
                <button key={name} aria-label={name}>{icon}</button>
              ))}
            </div>
            <div className="flex h-[26px] overflow-hidden rounded-[2px]">
              <input aria-label="搜索" placeholder="请输入元素实体编号" className="w-[107px] bg-[#171c26] pl-[8px] text-[11px] placeholder:text-[#a9a9a9]" />
              <button aria-label="查找" className="flex w-[38px] items-center justify-center bg-[#0a0a0a] text-white"><Search className="size-[18px]" strokeWidth={1.8} /></button>
            </div>
          </div>
          <PropertyPanel />
        </main>
      </div>
    </section>
  );
}

export default function App() {
  return (
    <div className="flex flex-col gap-[40px] overflow-hidden bg-white pt-[6px] font-['Noto_Sans_CJK_SC',sans-serif]">
      <ElementPage />
      <EditorPage />
    </div>
  );
}
